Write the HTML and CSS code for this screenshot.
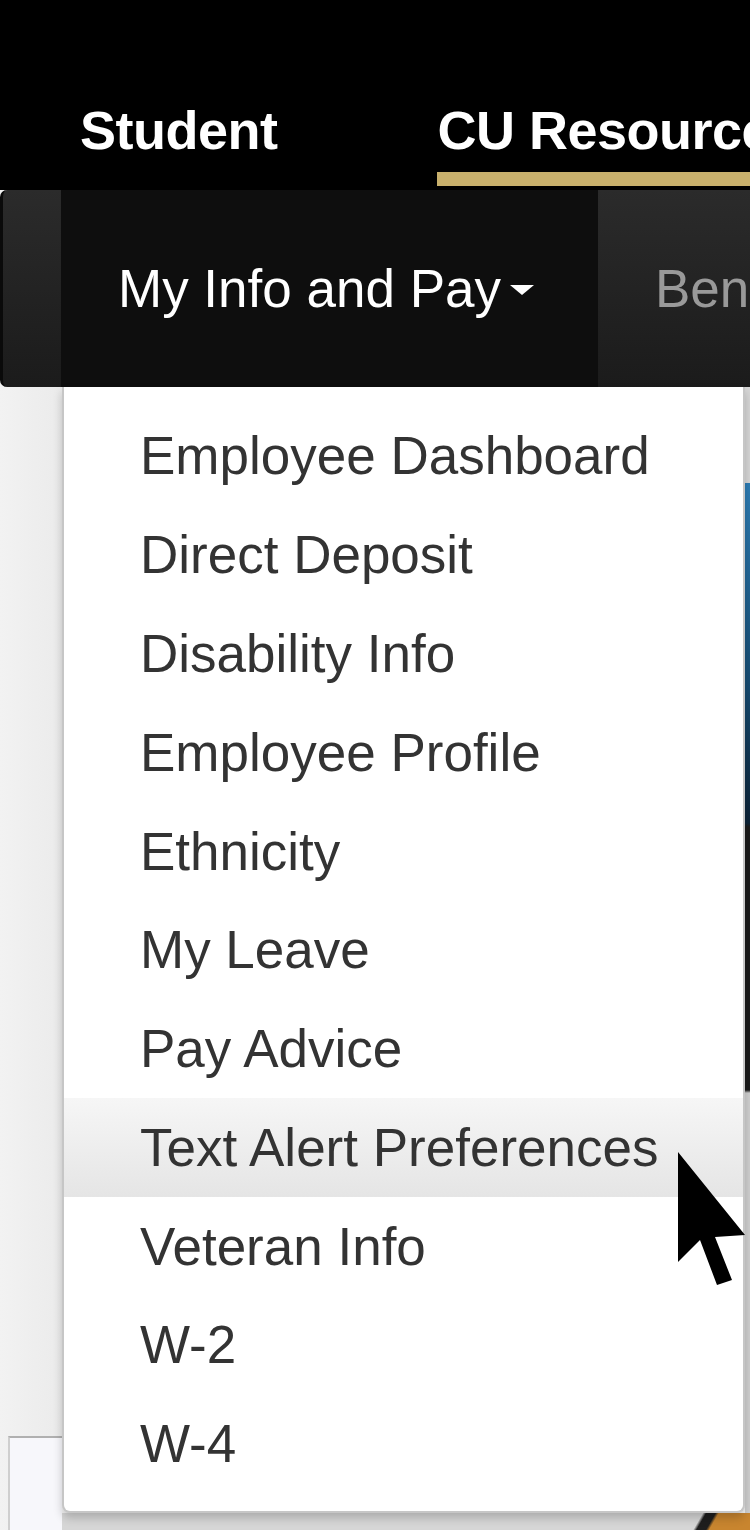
FILE: index.html
```html
<!DOCTYPE html>
<html lang="en">
<head>
<meta charset="utf-8">
<title>My Info and Pay</title>
<link rel="stylesheet" href="styles.css">
</head>
<body>
<div class="page">
  <header class="topbar">
    <a class="tab">Student</a>
    <a class="tab active">CU Resources</a>
  </header>
  <nav class="navbar">
    <div class="nav-edge"></div>
    <a class="nav-item open">My Info and Pay<span class="caret"></span></a>
    <a class="nav-item muted">Benefits</a>
  </nav>
  <div class="content">
    <div class="side"><div class="panel"></div></div>
    <div class="main"><div class="main-bottom"></div></div>
    <div class="strip"></div>
  </div>
  <ul class="dropdown">
    <li class="item">Employee Dashboard</li>
    <li class="item">Direct Deposit</li>
    <li class="item">Disability Info</li>
    <li class="item">Employee Profile</li>
    <li class="item">Ethnicity</li>
    <li class="item">My Leave</li>
    <li class="item">Pay Advice</li>
    <li class="item hover">Text Alert Preferences</li>
    <li class="item">Veteran Info</li>
    <li class="item">W-2</li>
    <li class="item">W-4</li>
  </ul>
  <svg class="cursor" width="70" height="136" viewBox="0 0 70 136">
    <polygon points="0,0 0,110 22,88 39,133 54,128 37,85 67,83" fill="#000"/>
  </svg>
</div>
</body>
</html>
```
FILE: styles.css
```css
* { box-sizing: border-box; }
html, body { margin: 0; padding: 0; }
body { width: 750px; height: 1530px; overflow: hidden; background: #f0f0f0; font-family: "Liberation Sans", Arial, sans-serif; }
.page { position: relative; width: 750px; height: 1530px; overflow: hidden; }

.topbar {
  height: 190px;
  background: #000;
  display: flex;
  align-items: flex-end;
  gap: 160px;
  padding: 0 0 4px 80px;
  white-space: nowrap;
}
.tab {
  font-weight: bold;
  font-size: 54px;
  line-height: 64px;
  color: #fff;
  padding-bottom: 10px;
  border-bottom: 14px solid transparent;
  letter-spacing: -0.5px;
}
.tab.active { border-bottom-color: #c8b06c; }

.navbar {
  height: 197px;
  display: flex;
  background: linear-gradient(#2b2b2b, #1b1b1b);
  border-left: 3px solid #0a0a0a;
  border-radius: 7px 0 0 7px;
  white-space: nowrap;
  overflow: hidden;
}
.nav-edge { width: 58px; flex: none; }
.nav-item {
  font-size: 53px;
  line-height: 197px;
  padding-left: 57px;
  color: #fff;
}
.nav-item.open { width: 537px; flex: none; background: #0e0e0e; }
.nav-item.muted { color: #999; }
.caret {
  display: inline-block;
  width: 0; height: 0;
  margin-left: 9px;
  border-top: 10px solid #fff;
  border-left: 12px solid transparent;
  border-right: 12px solid transparent;
  vertical-align: 12px;
}

.content { display: flex; height: 1143px; }
.side {
  width: 62px;
  flex: none;
  background: linear-gradient(to right, #f2f2f2, #ebebeb);
  padding-top: 1049px;
}
.panel {
  height: 100%;
  margin-left: 8px;
  border-left: 2px solid #cfcfcf;
  border-top: 2px solid #b0b0b0;
  background: #f7f7fb;
}
.main {
  flex: 1;
  background: #f4f4f4;
  display: flex;
  flex-direction: column;
  justify-content: flex-end;
}
.main-bottom {
  height: 17px;
  background: linear-gradient(120deg, #d6d6d6 0, #d6d6d6 555px, #1e1e1e 558px, #1e1e1e 566px, #c8852f 569px, #c8852f 100%);
}
.strip {
  width: 5px;
  flex: none;
  background: linear-gradient(#d6d6d6 0, #d6d6d6 96px, #2c7cb4 96px, #154a70 300px, #0b2236 436px, #1a1a1a 440px, #1a1a1a 703px, #cfcfcf 706px, #cfcfcf 1126px, #c8852f 1126px);
}

.dropdown {
  position: absolute;
  top: 387px;
  left: 62px;
  width: 683px;
  margin: 0;
  padding: 20px 0 17px;
  list-style: none;
  background: #fff;
  border: 2px solid #c6c6c6;
  border-top: none;
  border-radius: 0 0 8px 8px;
  box-shadow: 0 5px 10px rgba(0,0,0,0.2);
}
.item {
  font-size: 53px;
  line-height: 76px;
  padding: 11.4px 76px;
  color: #333;
  white-space: nowrap;
}
.item.hover { background: linear-gradient(#f6f6f6, #e5e5e5); }

.cursor { position: absolute; left: 678px; top: 1152px; }
```
